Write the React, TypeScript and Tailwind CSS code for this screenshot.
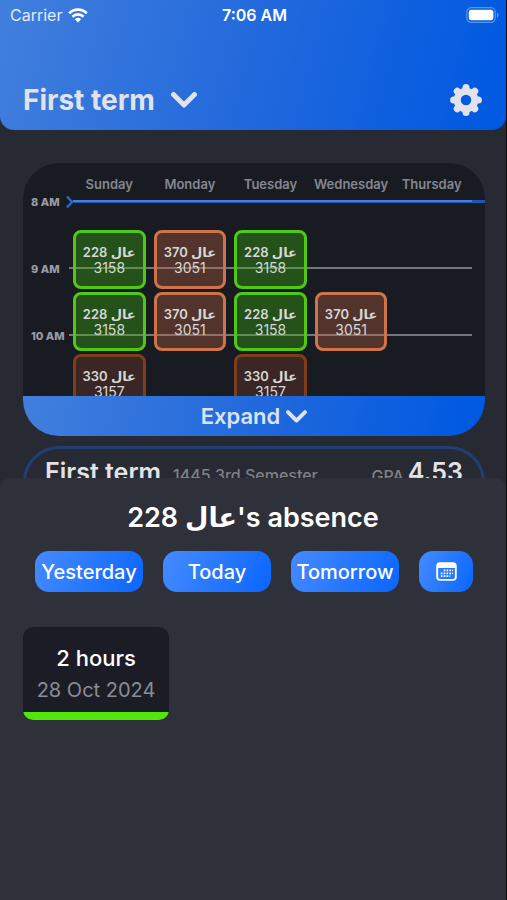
import React from "react";

type Course = {
  name: string;
  code: string;
  style: string;
};

const green: Course = {
  name: "عال 228",
  code: "3158",
  style: "border-[#50c814] bg-[#3bb80e]/35",
};

const orange: Course = {
  name: "عال 370",
  code: "3051",
  style: "border-[#cf7449] bg-[#bf6442]/35",
};

const brown: Course = {
  name: "عال 330",
  code: "3157",
  style: "border-[#7e3e1b] bg-[#3a2725]",
};

const days: { name: string; slots: (Course | null)[] }[] = [
  { name: "Sunday", slots: [green, green, brown] },
  { name: "Monday", slots: [orange, orange, null] },
  { name: "Tuesday", slots: [green, green, brown] },
  { name: "Wednesday", slots: [null, orange, null] },
  { name: "Thursday", slots: [null, null, null] },
];

const hours = ["8 AM", "9 AM", "10 AM"];

const quickDates = ["Yesterday", "Today", "Tomorrow"];

const Chevron = ({ className }: { className: string }) => (
  <svg viewBox="0 0 26 16" fill="none" className={className}>
    <path
      d="M2.5 2.5 13 13 23.5 2.5"
      stroke="currentColor"
      strokeWidth="4.8"
      strokeLinecap="round"
      strokeLinejoin="round"
    />
  </svg>
);

const Wifi = () => (
  <svg viewBox="0 0 20 15" className="h-[15px] w-5" fill="none" stroke="white" strokeWidth="2.6">
    <path d="M1.2 5.2a12.6 12.6 0 0 1 17.6 0" />
    <path d="M4.4 8.7a8 8 0 0 1 11.2 0" />
    <path d="M10 14.5 6.9 11.3a4.5 4.5 0 0 1 6.2 0Z" fill="white" stroke="none" />
  </svg>
);

const Battery = () => (
  <svg viewBox="0 0 33 16" className="h-4 w-[33px]" fill="none">
    <rect x="0.7" y="0.7" width="28.6" height="14.6" rx="4.6" stroke="white" strokeOpacity="0.35" strokeWidth="1.2" />
    <rect x="2.8" y="2.8" width="24.6" height="10.4" rx="2.6" fill="white" />
    <path d="M31 5.6v4.8a2.6 2.6 0 0 0 0-4.8Z" fill="white" fillOpacity="0.4" />
  </svg>
);

const Gear = () => (
  <svg viewBox="0 0 32 32" className="size-8" fill="none" stroke="currentColor">
    <circle cx="16" cy="16" r="8.8" strokeWidth="7" />
    {[0, 45, 90, 135, 180, 225, 270, 315].map((angle) => (
      <path
        key={angle}
        d="M16 7V3.6"
        strokeWidth="7"
        strokeLinecap="round"
        transform={`rotate(${angle} 16 16)`}
      />
    ))}
  </svg>
);

const Calendar = () => (
  <svg viewBox="0 0 22 20" className="h-[19px] w-[21px]">
    <rect x="1.2" y="1.2" width="19.6" height="17.6" rx="3" fill="none" stroke="white" strokeWidth="2" />
    <path d="M1 6.2V4a3 3 0 0 1 3-3h14a3 3 0 0 1 3 3v2.2Z" fill="white" />
    <g stroke="white" strokeWidth="1.8" strokeDasharray="1.8 1.2">
      <path d="M8 8.9h10" />
      <path d="M5 11.9h13" />
      <path d="M5 14.9h10" />
    </g>
  </svg>
);

const Header = () => (
  <header className="flex h-[130px] flex-col justify-between rounded-b-[14px] bg-[linear-gradient(105deg,#427fdd_0%,#2269dc_50%,#0059e1_97%)]">
    <div className="grid grid-cols-3 items-center pt-1 pr-[7px] pl-[10px] text-base leading-[22px] text-white">
      <div className="flex items-center gap-[6px] text-white/85">
        Carrier <Wifi />
      </div>
      <span className="text-center font-semibold">7:06 AM</span>
      <div className="flex justify-end">
        <Battery />
      </div>
    </div>
    <div className="flex items-center justify-between px-6 pb-3 pl-[23px] text-[#e2e3ea]">
      <button className="flex items-center gap-4 text-[28px] leading-9 font-bold">
        First term
        <Chevron className="h-4 w-[26px]" />
      </button>
      <button aria-label="Settings">
        <Gear />
      </button>
    </div>
  </header>
);

const Schedule = () => (
  <section className="mt-[33px] mr-[21px] ml-[23px] overflow-hidden rounded-[36px] bg-[#191b22]">
    <div className="grid grid-cols-5 pt-3 pr-[13px] pb-[3px] pl-[46px] text-center text-[13px] leading-[18px] font-semibold text-[#858790]">
      {days.map((day) => (
        <span key={day.name}>{day.name}</span>
      ))}
    </div>
    <div className="relative grid h-[200px] overflow-hidden">
      <div className="absolute top-1 right-0 left-[43px] flex h-[3px] items-center text-[#2467cf]">
        <svg viewBox="0 0 8 14" className="h-[14px] w-2 shrink-0" fill="none">
          <path d="M1 1.5 6 7 1 12.5" stroke="currentColor" strokeWidth="2.5" />
        </svg>
        <div className="h-[3px] flex-1 bg-[#1d57b5]" />
      </div>
      <div className="col-start-1 row-start-1 pr-[13px] pl-2">
        {hours.map((hour) => (
          <div key={hour} className="relative flex h-[67px]">
            <span className="w-[38px] text-[11px] leading-3 font-extrabold whitespace-nowrap text-[#9a9ca4]">
              {hour}
            </span>
            <div className={`mt-1 h-[2px] flex-1 ${hour === "8 AM" ? "ml-1 bg-[#4a7fd6]" : "bg-[#76777c]"}`} />
          </div>
        ))}
      </div>
      <div className="relative col-start-1 row-start-1 grid grid-cols-5 pt-[34px] pr-[13px] pl-[46px]">
        {days.map((day) => (
          <div key={day.name} className="flex flex-col gap-[3px] px-1">
            {day.slots.map((course, i) =>
              course ? (
                <div
                  key={i}
                  className={`flex h-[59px] shrink-0 flex-col items-center justify-center rounded-lg border-[3px] leading-4 whitespace-nowrap text-[#d5d8d6] ${course.style}`}
                >
                  <span className="text-[13px] leading-4 font-semibold">{course.name}</span>
                  <span className="text-sm leading-4">{course.code}</span>
                </div>
              ) : (
                <div key={i} className="h-[59px] shrink-0" />
              )
            )}
          </div>
        ))}
      </div>
    </div>
    <button className="flex h-10 w-full items-center justify-center gap-[6px] bg-[linear-gradient(105deg,#427fdd_0%,#2269dc_50%,#0059e1_97%)] text-[22px] font-semibold text-[#dbe3f3]">
      Expand
      <Chevron className="h-[13px] w-[21px]" />
    </button>
  </section>
);

const TermSummary = () => (
  <section className="mt-[10px] mr-[21px] ml-[23px] h-8 overflow-hidden">
    <div className="flex h-24 items-start justify-between rounded-[36px] border-[3px] border-[#203f74] px-[19px] pt-[7px] text-[#e2e3e8]">
      <div className="flex items-baseline gap-3">
        <h2 className="text-[25px] leading-8 font-semibold">First term</h2>
        <span className="text-base font-medium text-[#7f8187]">1445 3rd Semester</span>
      </div>
      <div className="flex items-end gap-1">
        <span className="text-base leading-6 font-medium text-[#7f8187]">GPA</span>
        <span className="text-[25px] leading-8 font-semibold">4.53</span>
      </div>
    </div>
  </section>
);

const AbsenceSheet = () => (
  <section className="flex-1 rounded-t-[10px] bg-[#2e303a] text-white">
    <h1 className="pt-5 text-center text-[27px] leading-10 font-semibold">عال 228's absence</h1>
    <div className="flex gap-5 pt-[13px] pr-[33px] pl-[35px]">
      {quickDates.map((label) => (
        <button
          key={label}
          className="h-[41px] flex-2 rounded-[14px] bg-[linear-gradient(115deg,#468bff,#0a66ff)] text-xl font-medium"
        >
          {label}
        </button>
      ))}
      <button
        aria-label="Pick a date"
        className="flex h-[41px] flex-1 items-center justify-center rounded-[14px] bg-[linear-gradient(115deg,#468bff,#0a66ff)]"
      >
        <Calendar />
      </button>
    </div>
    <ul className="grid grid-cols-3 gap-3 pt-[35px] pr-[21px] pl-[23px]">
      <li className="overflow-hidden rounded-[10px] bg-[#1b1c26] pt-[15px] text-center">
        <p className="text-[22px] leading-8 font-medium">2 hours</p>
        <p className="text-xl leading-8 text-[#8b8c93]">28 Oct 2024</p>
        <div className="mt-[6px] h-2 bg-[#52e60a]" />
      </li>
    </ul>
  </section>
);

const App = () => {
  return (
    <main className="flex min-h-screen flex-col border-r border-[#0b0c10] bg-[#272a32] font-['Inter','DejaVu_Sans',sans-serif]">
      <Header />
      <Schedule />
      <TermSummary />
      <AbsenceSheet />
    </main>
  );
};

export default App;
